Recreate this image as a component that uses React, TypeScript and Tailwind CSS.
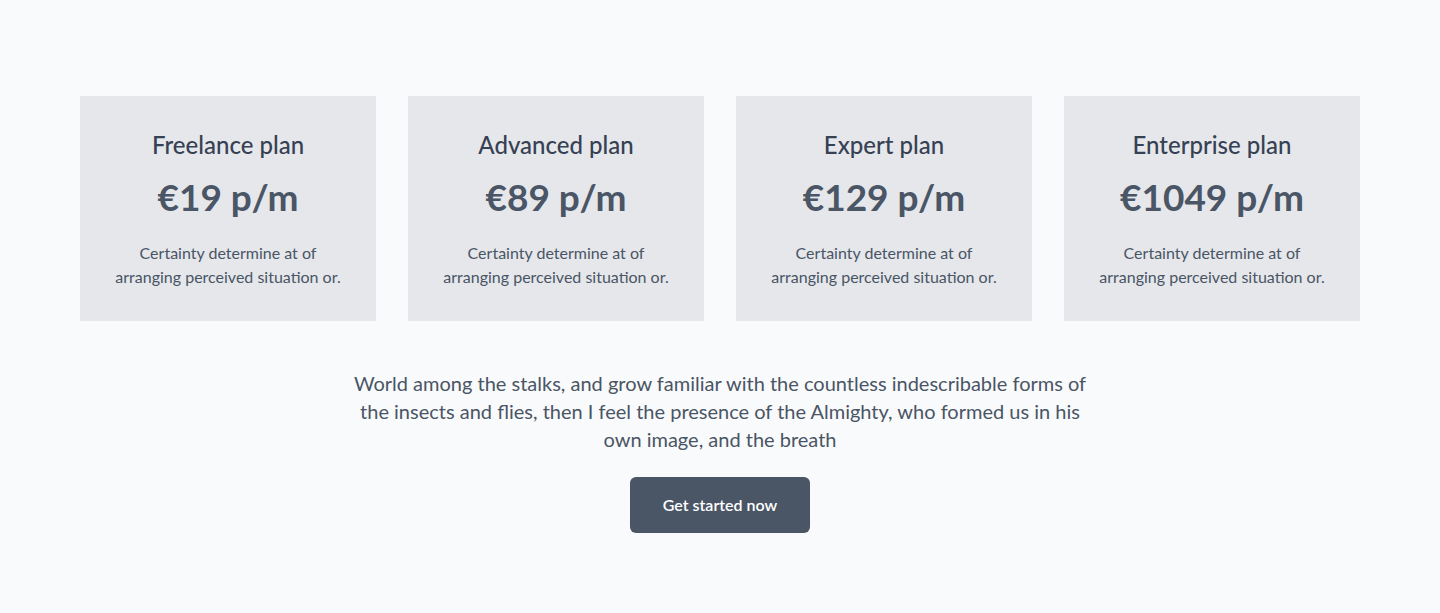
const plans = [
  { name: 'Freelance plan', price: '€19 p/m' },
  { name: 'Advanced plan', price: '€89 p/m' },
  { name: 'Expert plan', price: '€129 p/m' },
  { name: 'Enterprise plan', price: '€1049 p/m' },
]

export default function App() {
  return (
    <div
      className="min-h-[613px] bg-gray-50 py-24"
      style={{ fontFamily: '"Segoe UI", Lato, sans-serif' }}
    >
      <div className="mx-auto max-w-7xl">
        <div className="grid grid-cols-4 gap-8">
          {plans.map((plan) => (
            <div key={plan.name} className="bg-gray-200 px-6 pt-[33px] pb-8 text-center">
              <h3 className="text-2xl leading-8 font-medium text-gray-700">{plan.name}</h3>
              <p className="mt-4 text-[37px] leading-10 font-bold text-gray-600">{plan.price}</p>
              <p className="mx-auto mt-6 text-base leading-6 text-gray-600">
                Certainty determine at of
                <br />
                arranging perceived situation or.
              </p>
            </div>
          ))}
        </div>
        <p className="mx-auto mt-12 max-w-3xl text-center text-xl leading-7 text-gray-600">
          World among the stalks, and grow familiar with the countless indescribable forms of
          <br />
          the insects and flies, then I feel the presence of the Almighty, who formed us in his
          <br />
          own image, and the breath
        </p>
        <div className="mt-6 flex justify-center">
          <button
            type="button"
            className="h-14 w-[180px] rounded-md bg-gray-600 text-base font-semibold text-white"
          >
            Get started now
          </button>
        </div>
      </div>
    </div>
  )
}
